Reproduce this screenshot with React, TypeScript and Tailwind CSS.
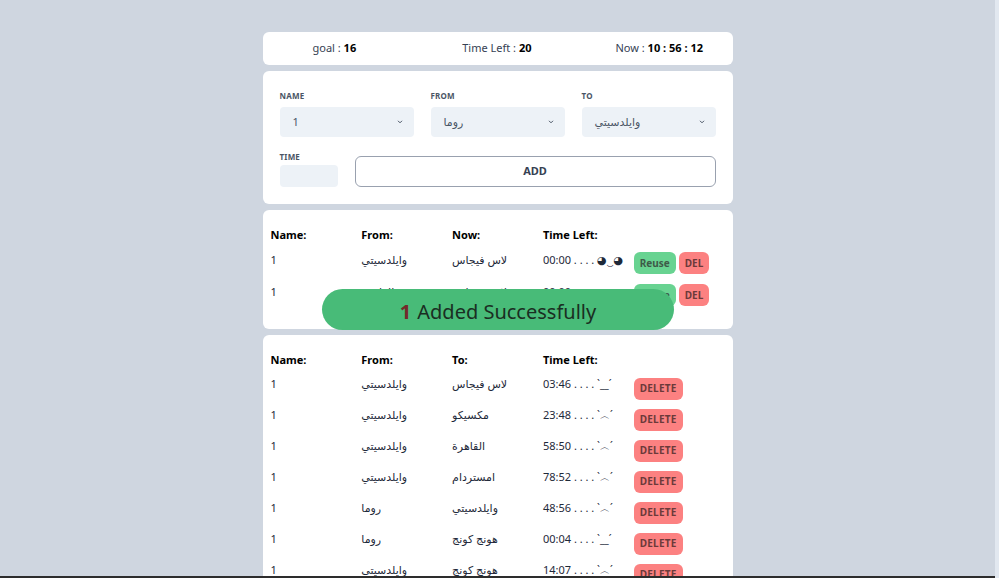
import React from "react";

const font = { fontFamily: '"Noto Sans", "DejaVu Sans", sans-serif' };

function Chevron() {
  return (
    <svg width="8" height="8" viewBox="0 0 20 20" className="text-gray-600">
      <path d="M5 7l5 5 5-5" fill="none" stroke="currentColor" strokeWidth="2.5" />
    </svg>
  );
}

function Select({ value }: { value: string }) {
  return (
    <div className="h-[30px] bg-[#edf2f7] rounded-sm flex items-center justify-between pl-[13px] pr-[10px] text-[11px] text-gray-600">
      <span>{value}</span>
      <Chevron />
    </div>
  );
}

const top = [
  ["1", "وايلدسيتي", "لاس فيجاس", "00:00 . . . . ◕‿◕"],
  ["1", "القاهرة", "لاس فيجاس", "00:00 . . . . ◕‿◕"],
];

const bottom: [string, string, string, string, boolean][] = [
  ["1", "وايلدسيتي", "لاس فيجاس", "03:46", true],
  ["1", "وايلدسيتي", "مكسيكو", "23:48", false],
  ["1", "وايلدسيتي", "القاهرة", "58:50", false],
  ["1", "وايلدسيتي", "امستردام", "78:52", false],
  ["1", "روما", "وايلدسيتي", "48:56", false],
  ["1", "روما", "هونج كونج", "00:04", true],
  ["1", "وايلدسيتي", "هونج كونج", "14:07", false],
];

export default function App() {
  return (
    <div style={font} className="bg-[#cfd6e0] text-[#2d3748] relative overflow-hidden h-[578px] pr-[4px]">
      <div className="w-[470px] mx-auto pt-[32px] flex flex-col gap-[6px]">
        <div className="bg-white rounded-md h-[33px] flex items-center pl-[50px] text-[11px] text-gray-700 whitespace-nowrap">
          <div className="mr-[106px]">goal : <b className="text-black">16</b></div>
          <div className="mr-[84px]">Time Left : <b className="text-black">20</b></div>
          <div>Now : <b className="text-black">10 : 56 : 12</b></div>
        </div>

        <div className="bg-white rounded-md px-[17px] pt-[19px] pb-[17px]">
          <div className="grid grid-cols-3 gap-x-[17px]">
            {[
              ["NAME", "1"],
              ["FROM", "روما"],
              ["TO", "وايلدسيتي"],
            ].map(([l, v]) => (
              <div key={l}>
                <div className="text-[8px] font-bold text-gray-600 h-[11px] leading-[11px] mb-[6px] tracking-wide">{l}</div>
                <Select value={v} />
              </div>
            ))}
          </div>
          <div className="flex items-end gap-[17px] mt-[14px]">
            <div className="w-[58px]">
              <div className="text-[8px] font-bold text-gray-600 h-[11px] leading-[11px] mb-[3px] tracking-wide">TIME</div>
              <div className="h-[22px] bg-[#edf2f7] rounded-sm" />
            </div>
            <div className="flex-1 h-[31px] border border-gray-400 rounded-md flex items-center justify-center text-[11px] font-bold text-gray-700">
              ADD
            </div>
          </div>
        </div>

        <div className="bg-white rounded-md px-[8px] pt-[17px] pb-[21px] text-[11px]">
          <div className="grid grid-cols-5 h-[17px] items-center font-bold text-black">
            <div>Name:</div><div>From:</div><div>Now:</div><div>Time Left:</div><div />
          </div>
          {top.map((r, i) => (
            <div key={i} className="grid grid-cols-5 h-[32px] items-center text-gray-800">
              <div>{r[0]}</div><div>{r[1]}</div><div>{r[2]}</div>
              <div className="whitespace-nowrap">{r[3]}</div>
              <div className="flex gap-[3px] pt-[6px]">
                <span className="h-[22px] px-[6px] rounded-md bg-[#68d391] text-[#3e5a48] font-bold text-[10px] flex items-center">Reuse</span>
                <span className="h-[22px] px-[6px] rounded-md bg-[#fc8181] text-[#6b3a3a] font-bold text-[10px] flex items-center">DEL</span>
              </div>
            </div>
          ))}
        </div>

        <div className="bg-white rounded-md px-[8px] pt-[17px] pb-[10px] text-[11px]">
          <div className="grid grid-cols-5 h-[17px] items-center font-bold text-black">
            <div>Name:</div><div>From:</div><div>To:</div><div>Time Left:</div><div />
          </div>
          {bottom.map((r, i) => (
            <div key={i} className="grid grid-cols-5 h-[31px] items-center text-gray-800">
              <div>{r[0]}</div><div>{r[1]}</div><div>{r[2]}</div>
              <div className="whitespace-nowrap">{r[3]} . . . . <span className="text-[10px]">{r[4] ? "ˋ__ˊ" : "ˋ︿ˊ"}</span></div>
              <div className="flex pt-[8px]">
                <span className="h-[22px] px-[6px] rounded-md bg-[#fc8181] text-[#6b3a3a] font-bold text-[10px] flex items-center tracking-wide">DELETE</span>
              </div>
            </div>
          ))}
        </div>
      </div>

      <div className="absolute left-[322px] top-[289px] w-[352px] h-[41px] pt-[4px] rounded-full bg-[#48bb78] flex items-center justify-center text-[20px] text-[#1a2e22]">
        <b className="text-[#742a2a] mr-[6px]">1</b>Added Successfully
      </div>
      <div className="absolute left-0 right-0 bottom-0 h-[2px] bg-[#2d2d2d]" />
      <div className="absolute right-0 top-0 bottom-0 w-[4px] bg-[#e2e8f0]" />
    </div>
  );
}
